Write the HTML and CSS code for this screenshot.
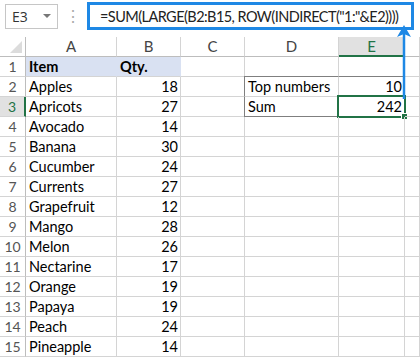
FILE: index.html
```html
<!DOCTYPE html>
<html lang="en">
<head>
  <meta charset="UTF-8" />
  <title>Sum of top numbers</title>
  <link rel="stylesheet" href="styles.css">
</head>
<body>
  <div class="bar">
    <div class="namebox"><span>E3</span><span class="caret"></span></div>
    <div class="dots">&#8942;</div>
    <div class="formula">=SUM(LARGE(B2:B15, ROW(INDIRECT("1:"&amp;E2))))</div>
  </div>

  <div class="sheet">
    <div class="grid" id="grid"></div>
    <svg class="arrow" width="20" height="74" viewBox="0 0 20 74">
      <line x1="10" y1="6" x2="10" y2="74" stroke="#1e88e5" stroke-width="2.5"/>
      <polygon points="10,0 3,12 10,9 17,12" fill="#1e88e5"/>
    </svg>
  </div>

  <script>
    const items = [
      ["Apples", 18], ["Apricots", 27], ["Avocado", 14], ["Banana", 30],
      ["Cucumber", 24], ["Currents", 27], ["Grapefruit", 12], ["Mango", 28],
      ["Melon", 26], ["Nectarine", 17], ["Orange", 19], ["Papaya", 19],
      ["Peach", 24], ["Pineapple", 14]
    ];
    const grid = document.getElementById("grid");

    function cell(text, cls) {
      const div = document.createElement("div");
      div.className = "cell " + (cls || "");
      div.textContent = text;
      grid.appendChild(div);
      return div;
    }

    // column headers
    cell("", "corner");
    ["A", "B", "C", "D", "E", ""].forEach((c, i) => {
      cell(c, "colhead" + (c === "E" ? " active" : ""));
    });

    for (let r = 1; r <= 15; r++) {
      cell(r, "rowhead" + (r === 3 ? " active" : ""));
      if (r === 1) {
        cell("Item", "head");
        cell("Qty.", "head");
      } else {
        cell(items[r - 2][0]);
        cell(items[r - 2][1], "num");
      }
      cell("");
      if (r === 2) {
        cell("Top numbers", "box box-top box-left");
        cell(10, "num box box-top box-right");
      } else if (r === 3) {
        cell("Sum", "box box-bottom box-left");
        const sel = cell(242, "num box box-bottom box-right selected");
        sel.innerHTML = '242<span class="sel-frame"></span><span class="handle"></span>';
      } else {
        cell("");
        cell("");
      }
      cell("");
    }
  </script>
</body>
</html>
```

FILE: styles.css
```css
body {
  margin: 0;
  background: #fff;
  font-family: 'Lato', 'Open Sans', sans-serif;
  color: #000;
  width: 420px;
  height: 359px;
  overflow: hidden;
}

.bar {
  display: flex;
  align-items: center;
  height: 30px;
  padding-top: 2px;
  box-sizing: border-box;
}
.namebox {
  flex-shrink: 0;
  margin-left: 5px;
  width: 53px;
  height: 25px;
  border: 1px solid #c6c6c6;
  box-sizing: border-box;
  display: flex;
  align-items: center;
  justify-content: space-between;
  padding: 0 6px 0 6px;
  font-family: 'Open Sans', sans-serif;
  font-size: 14px;
  color: #333;
}
.caret {
  width: 0;
  height: 0;
  border-left: 4px solid transparent;
  border-right: 4px solid transparent;
  border-top: 4px solid #777;
}
.dots {
  flex-shrink: 0;
  width: 29px;
  text-align: center;
  color: #aaa;
  font-size: 16px;
}
.formula {
  flex: 1;
  min-width: 0;
  margin-right: 6px;
  height: 28px;
  border: 3px solid #1e88e5;
  box-sizing: border-box;
  padding-left: 10px;
  display: flex;
  align-items: center;
  font-family: 'Lato', sans-serif;
  font-size: 14.5px;
  letter-spacing: -0.55px;
  color: #222;
  white-space: nowrap;
  overflow: hidden;
}

.sheet {
  position: relative;
  margin-top: 7px;
}
.grid {
  display: grid;
  grid-template-columns: 26px 91px 64px 64px 94px 66px 1fr;
  grid-auto-rows: 20px;
}
.cell {
  border-right: 1px solid #d4d4d4;
  border-bottom: 1px solid #d4d4d4;
  font-size: 14.5px;
  line-height: 19px;
  padding: 0 3px;
  white-space: nowrap;
  position: relative;
}
.corner {
  border-right: 1px solid #bdbdbd;
  border-bottom: 1px solid #bdbdbd;
}
.corner::after {
  content: "";
  position: absolute;
  right: 3px;
  bottom: 3px;
  border-left: 12px solid transparent;
  border-bottom: 12px solid #dcdcdc;
}
.colhead {
  text-align: center;
  color: #444;
  border-bottom-color: #bdbdbd;
  font-size: 15px;
}
.colhead.active {
  background: #e1e1e1;
  color: #217346;
  border-bottom: 2px solid #217346;
}
.rowhead {
  text-align: center;
  color: #555;
  padding: 0;
  border-right-color: #bdbdbd;
  font-size: 14px;
}
.rowhead.active {
  background: #e1e1e1;
  color: #217346;
  border-right: 2px solid #217346;
}
.head {
  background: #d9e1f2;
  font-weight: bold;
  border-right-color: #d9e1f2;
}
.num {
  text-align: right;
  padding-right: 2px;
}
.box-top {
  border-top: 1px solid #7f7f7f;
  margin-top: -1px;
}
.box-left {
  border-left: 1px solid #7f7f7f;
  margin-left: -1px;
}
.box-right {
  border-right-color: #7f7f7f;
}
.box-bottom {
  border-bottom-color: #7f7f7f;
}
.sel-frame {
  position: absolute;
  left: -2px;
  top: -2px;
  right: -2px;
  bottom: -2px;
  border: 2px solid #217346;
}
.handle {
  position: absolute;
  right: -4px;
  bottom: -4px;
  width: 5px;
  height: 5px;
  background: #217346;
  border: 1px solid #fff;
}
.arrow {
  position: absolute;
  left: 394px;
  top: -12px;
}
```
